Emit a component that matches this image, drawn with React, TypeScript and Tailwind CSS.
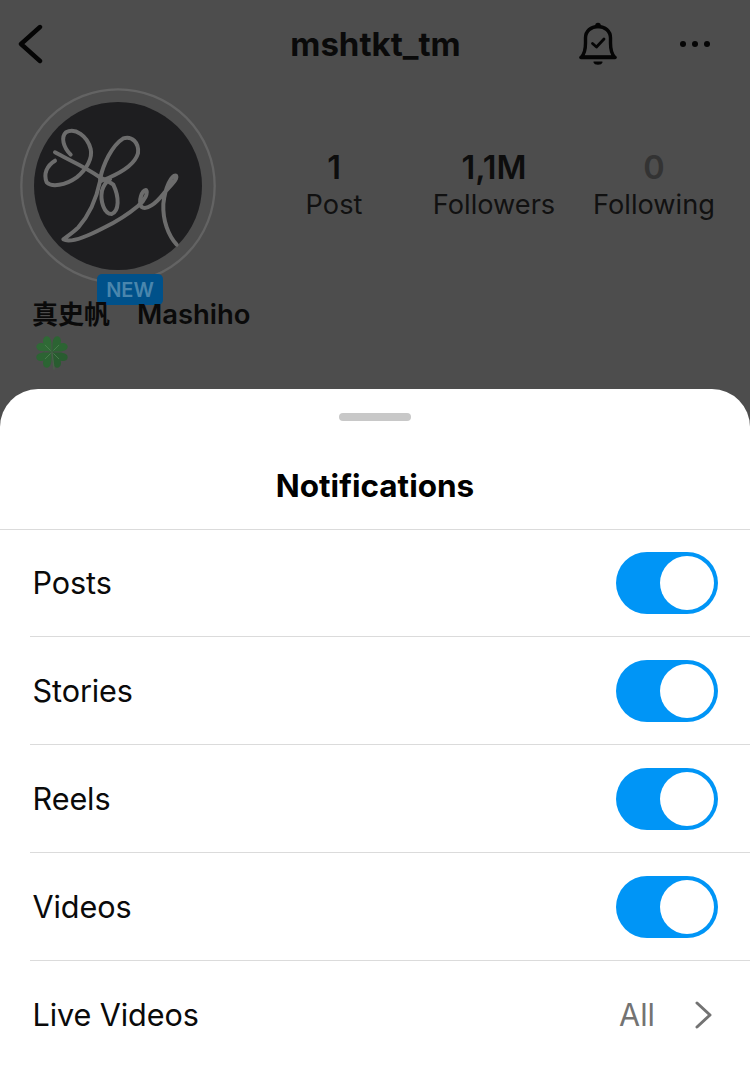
import React from "react";

function Toggle() {
  return (
    <div className="mr-[32px] flex h-[62px] w-[102px] items-center justify-end rounded-full bg-[#0095f6] pr-[4px]">
      <div className="h-[54px] w-[54px] rounded-full bg-white" />
    </div>
  );
}

function Row({ label, children, first, last }: { label: string; children: React.ReactNode; first?: boolean; last?: boolean }) {
  return (
    <div className={`ml-[30px] flex items-center justify-between pl-[2.5px] ${first ? "h-[107px]" : "h-[108px]"} ${last ? "" : "border-b border-[#dbdbdb]"}`}>
      <span className="text-[30.6px] leading-[36px] tracking-[-0.1px] text-[#0a0a0a]">{label}</span>
      {children}
    </div>
  );
}

function Stat({ value, label, muted }: { value: string; label: string; muted?: boolean }) {
  return (
    <div className="flex w-[160px] flex-col items-center">
      <span className={`text-[32.5px] font-semibold leading-[36px] ${muted ? "text-[#333333]" : "text-[#0d0d0d]"}`}>{value}</span>
      <span className="mt-[1px] text-[27.2px] leading-[36px] text-[#111111]">{label}</span>
    </div>
  );
}

function Avatar() {
  return (
    <svg width="197" height="197" viewBox="60 262 591 591">
      <circle cx="354" cy="556" r="290" fill="none" stroke="#636363" strokeWidth="7" />
      <circle cx="354" cy="556" r="252" fill="#1e1e20" />
      <g fill="none" stroke="#6c6c6c" strokeWidth="12" strokeLinecap="round" strokeLinejoin="round">
        <path d="M165 455C200 475 250 495 300 530C320 540 330 545 340 552C358 590 358 630 335 640C312 640 300 600 306 570C312 550 320 542 330 536" />
        <path d="M165 480C140 495 130 520 140 545C155 560 195 555 230 530C262 505 278 470 272 445C262 405 225 380 198 395C182 410 190 440 212 462" />
        <path d="M300 535C310 490 335 435 370 413C395 405 418 425 414 458C405 490 365 515 325 532L300 542" />
        <path d="M300 542C290 590 270 640 235 680C220 695 200 708 190 716C210 728 260 708 310 682C345 665 385 640 415 615C435 600 445 575 438 568C425 570 415 600 424 618C440 632 470 605 490 580C510 555 535 535 528 525C515 522 495 560 490 610C488 660 505 705 530 732" />
      </g>
    </svg>
  );
}

function Leaf({ angle, fill }: { angle: number; fill: string }) {
  return (
    <g transform={`translate(17 17) rotate(${angle})`}>
      <path d="M0 0C-1.5 -3 -8 -7 -8.5 -12C-8.5 -16.5 -2.5 -17.5 0 -12C2.5 -17.5 8.5 -16.5 8.5 -12C8 -7 1.5 -3 0 0Z" fill={fill} />
      <path d="M0 -2V-10" stroke="#4d7f52" strokeWidth="0.8" fill="none" />
    </g>
  );
}

function Clover() {
  return (
    <svg width="34" height="36" viewBox="0 0 34 36">
      <Leaf angle={-45} fill="#2f6a36" />
      <Leaf angle={45} fill="#2c6433" />
      <Leaf angle={135} fill="#295c30" />
      <Leaf angle={225} fill="#2c6433" />
      <path d="M17 17L19 34" stroke="#4a5f4a" strokeWidth="1.4" fill="none" strokeLinecap="round" />
    </svg>
  );
}

export default function App() {
  return (
    <div className="flex h-[1066px] w-[750px] flex-col overflow-hidden bg-[#4d4d4d] font-['Inter','Noto_Sans_CJK_JP',sans-serif]">
      <div className="flex h-[88px] shrink-0 items-center">
        <svg className="ml-[17px]" width="28" height="40" viewBox="0 0 28 40">
          <path d="M23 3L4 20L23 37" fill="none" stroke="#050505" strokeWidth="4.4" strokeLinecap="round" strokeLinejoin="round" />
        </svg>
        <span className="ml-[245px] w-[171px] text-center text-[33px] font-bold leading-[40px] whitespace-nowrap text-[#0a0a0a]">mshtkt_tm</span>
        <svg className="ml-[117px]" width="40" height="46" viewBox="0 0 40 46">
          <path d="M3.5 36C7 32 7.5 28 7.5 22V17C7.5 10 13 5.5 20 5.5C27 5.5 32.5 10 32.5 17V22C32.5 28 33 32 36.5 36Z" fill="none" stroke="#050505" strokeWidth="3.4" strokeLinejoin="round" />
          <path d="M3 36.5H37" stroke="#050505" strokeWidth="3.6" strokeLinecap="round" />
          <circle cx="20" cy="4.5" r="2.8" fill="#050505" />
          <path d="M16 41H24C23 43.8 17 43.8 16 41Z" fill="#050505" stroke="#050505" strokeWidth="1.2" strokeLinejoin="round" />
          <path d="M14.5 22.5L18.5 26L26 18" fill="none" stroke="#050505" strokeWidth="2.8" strokeLinecap="round" strokeLinejoin="round" />
        </svg>
        <div className="ml-[62px] flex items-center gap-[6px]">
          <div className="h-[6px] w-[6px] rounded-full bg-[#050505]" />
          <div className="h-[6px] w-[6px] rounded-full bg-[#050505]" />
          <div className="h-[6px] w-[6px] rounded-full bg-[#050505]" />
        </div>
      </div>

      <div className="flex h-[208px] shrink-0">
        <div className="relative ml-[20px] h-[197px] w-[197px]">
          <Avatar />
          <div className="absolute left-[77px] top-[186px] flex h-[31px] w-[66px] items-center justify-center rounded-[5px] bg-[#00518a] text-[20px] font-semibold text-[#4a86ad]">NEW</div>
        </div>
        <div className="ml-[37px] flex h-full pt-[62px]">
          <Stat value="1" label="Post" />
          <Stat value="1,1M" label="Followers" />
          <Stat value="0" label="Following" muted />
        </div>
      </div>

      <div className="relative ml-[32px] flex h-[36px] shrink-0 items-baseline font-semibold leading-[36px] text-[#0a0a0a]">
        <span className="text-[26px]">真史帆</span>
        <span className="ml-[27px] text-[27.4px]">Mashiho</span>
      </div>
      <div className="ml-[35px] mt-[3px] h-[36px] shrink-0"><Clover /></div>

      <div className="mt-[18px] flex-1 rounded-t-[38px] bg-white">
        <div className="flex h-[141px] flex-col items-center border-b border-[#dbdbdb] pt-[24px]">
          <div className="h-[8px] w-[72px] rounded-full bg-[#c8c8c8]" />
          <div className="mt-[47px] text-[31.5px] font-bold leading-[36px] text-black">Notifications</div>
        </div>
        <Row label="Posts" first><Toggle /></Row>
        <Row label="Stories"><Toggle /></Row>
        <Row label="Reels"><Toggle /></Row>
        <Row label="Videos"><Toggle /></Row>
        <Row label="Live Videos" last>
          <div className="mr-[37px] flex items-center">
            <span className="text-[30.6px] leading-[36px] text-[#737373]">All</span>
            <svg className="ml-[38px]" width="20" height="30" viewBox="0 0 20 30">
              <path d="M4 3L17 15L4 27" fill="none" stroke="#737373" strokeWidth="3" strokeLinecap="round" strokeLinejoin="round" />
            </svg>
          </div>
        </Row>
      </div>
    </div>
  );
}
